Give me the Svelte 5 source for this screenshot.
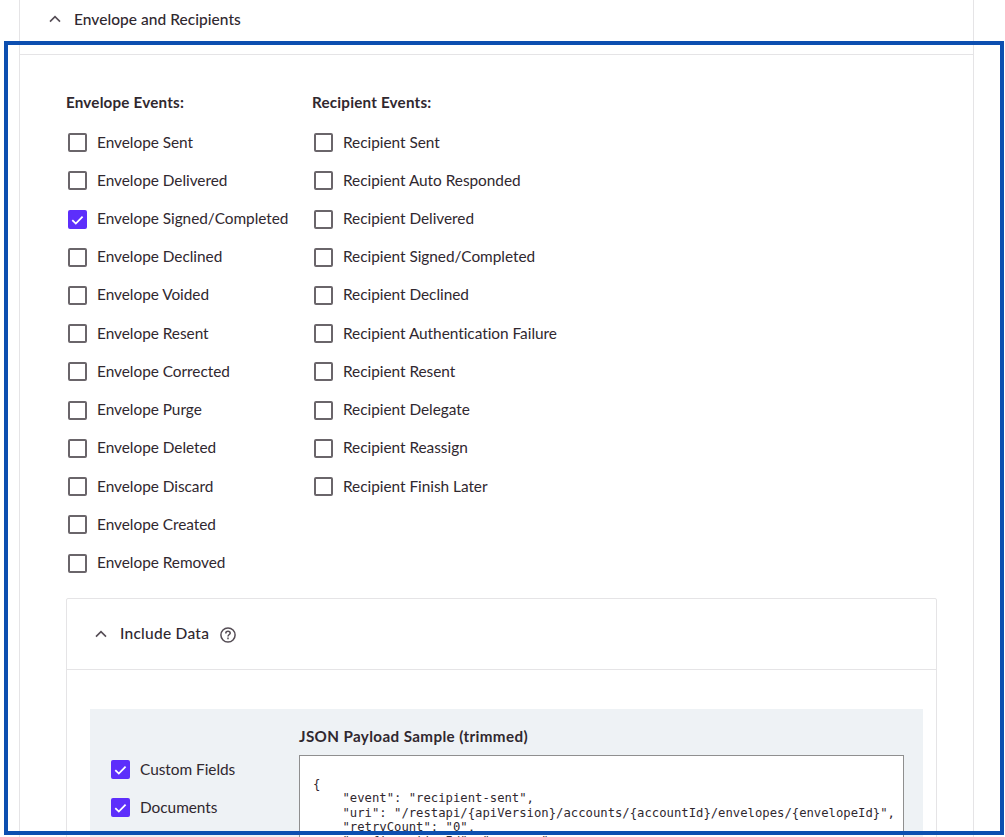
<script lang="ts">
	type Option = { label: string; checked?: boolean };

	const toOptions = (prefix: string, names: string[], checked: string[] = []): Option[] =>
		names.map((name) => ({ label: `${prefix} ${name}`, checked: checked.includes(name) }));

	let groups = $state([
		{
			title: "Envelope Events:",
			options: toOptions(
				"Envelope",
				[
					"Sent",
					"Delivered",
					"Signed/Completed",
					"Declined",
					"Voided",
					"Resent",
					"Corrected",
					"Purge",
					"Deleted",
					"Discard",
					"Created",
					"Removed",
				],
				["Signed/Completed"]
			),
		},
		{
			title: "Recipient Events:",
			options: toOptions("Recipient", [
				"Sent",
				"Auto Responded",
				"Delivered",
				"Signed/Completed",
				"Declined",
				"Authentication Failure",
				"Resent",
				"Delegate",
				"Reassign",
				"Finish Later",
			]),
		},
	]);

	let includes: Option[] = $state([
		{ label: "Custom Fields", checked: true },
		{ label: "Documents", checked: true },
		{ label: "", checked: false },
	]);

	const payload = `{
    "event": "recipient-sent",
    "uri": "/restapi/{apiVersion}/accounts/{accountId}/envelopes/{envelopeId}",
    "retryCount": "0",
    "configurationId": "xxxxxxx",`;
</script>

{#snippet chevron()}
	<svg class="chevron" viewBox="0 0 12 8" aria-hidden="true">
		<path d="M1 6.6 6 1.6 11 6.6" />
	</svg>
{/snippet}

{#snippet checkbox(option: Option)}
	<label class="option">
		<input type="checkbox" bind:checked={option.checked} />
		<span class="box" class:checked={option.checked}>
			{#if option.checked}
				<svg viewBox="0 0 19 19" aria-hidden="true"><path d="M4.3 10.2 7.8 13.6 14.6 6.6" /></svg>
			{/if}
		</span>
		<span class="label">{option.label}</span>
	</label>
{/snippet}

<div class="page">
	<section class="panel">
		<header class="panel-header">
			{@render chevron()}
			<h2>Envelope and Recipients</h2>
		</header>

		<div class="events">
			{#each groups as group}
				<div class="group">
					<h3>{group.title}</h3>
					{#each group.options as option}
						{@render checkbox(option)}
					{/each}
				</div>
			{/each}
		</div>

		<section class="include">
			<header class="include-header">
				{@render chevron()}
				<h2>Include Data</h2>
				<svg class="help" viewBox="0 0 16 16" aria-hidden="true">
					<circle cx="8" cy="8" r="7.1" />
					<path d="M5.8 6.4C5.8 5.1 6.7 4.3 8 4.3S10.2 5.1 10.2 6.2C10.2 7.5 8 7.6 8 9.4" />
					<path d="M8 10.6V12.2" />
				</svg>
			</header>
			<div class="include-body">
				<div class="include-options">
					{#each includes as option}
						{@render checkbox(option)}
					{/each}
				</div>
				<div class="sample">
					<h4>JSON Payload Sample (trimmed)</h4>
					<pre>{payload}</pre>
				</div>
			</div>
		</section>
	</section>

	<div class="highlight"></div>
</div>

<style>
	:global(body) {
		background: #fff;
		overflow: hidden;
	}
	.page {
		position: relative;
		box-sizing: border-box;
		width: 1005px;
		height: 837px;
		padding: 0 31px 0 19px;
		overflow: hidden;
		font-family: Lato, "Liberation Sans", sans-serif;
		color: #30282f;
	}
	h2,
	h3,
	h4 {
		margin: 0;
	}
	.panel {
		box-sizing: border-box;
		height: 1000px;
		border: solid #e5e4e6;
		border-width: 0 1px;
	}
	.panel-header {
		display: flex;
		align-items: center;
		box-sizing: border-box;
		height: 55px;
		padding: 0 0 16px 29px;
		border-bottom: 1px solid #e5e4e6;
	}
	.chevron {
		width: 12px;
		height: 8px;
		fill: none;
		stroke: #554d55;
		stroke-width: 1.6;
	}
	h2 {
		margin-left: 13px;
		font-size: 15.5px;
		font-weight: 500;
		line-height: 20px;
	}
	.panel-header h2 {
		letter-spacing: 0.04px;
	}
	.events {
		display: flex;
		box-sizing: border-box;
		height: 543px;
		padding: 37px 0 0 46px;
	}
	.group {
		width: 246px;
		flex-shrink: 0;
	}
	.group:last-child {
		width: 300px;
	}
	h3,
	h4 {
		font-size: 15.2px;
		font-weight: 700;
		line-height: 20px;
	}
	h3 {
		margin-bottom: 11px;
		letter-spacing: 0.2px;
	}
	h4 {
		letter-spacing: 0.38px;
	}
	.option {
		display: flex;
		align-items: center;
		height: 38.22px;
		padding-left: 2px;
	}
	.option input {
		position: absolute;
		opacity: 0;
	}
	.box {
		box-sizing: border-box;
		flex-shrink: 0;
		width: 19px;
		height: 19px;
		margin-top: 1px;
		border: 2px solid #6a656a;
		border-radius: 2px;
		background: #fff;
	}
	.box.checked {
		border: 0;
		background: #5d2efb;
	}
	.box svg {
		display: block;
		width: 19px;
		height: 19px;
		fill: none;
		stroke: #fff;
		stroke-width: 1.8;
	}
	.label {
		margin: 0 0 1px 10px;
		font-size: 15.4px;
		line-height: 20px;
		white-space: nowrap;
		letter-spacing: -0.03px;
	}
	.include {
		box-sizing: border-box;
		width: 871px;
		height: 400px;
		margin-left: 46px;
		border: 1px solid #e5e4e6;
		border-radius: 2px;
	}
	.include-header {
		display: flex;
		align-items: center;
		height: 70px;
		padding-left: 28px;
		border-bottom: 1px solid #e5e4e6;
	}
	.include-header h2 {
		margin-bottom: 2px;
		letter-spacing: 0.25px;
	}
	.help {
		width: 16px;
		height: 16px;
		margin: 1px 0 0 11px;
		fill: none;
		stroke: #554d55;
		stroke-width: 1.5;
	}
	.include-body {
		display: flex;
		box-sizing: border-box;
		width: 833px;
		height: 300px;
		margin: 39px 0 0 23px;
		background: #eef2f5;
	}
	.include-options {
		width: 209px;
		padding-top: 41px;
	}
	.include-options .option {
		padding-left: 21px;
	}
	.sample {
		padding-top: 17px;
	}
	pre {
		box-sizing: border-box;
		width: 605px;
		height: 240px;
		margin: 9px 0 0;
		padding: 21px 0 0 13px;
		border: 1px solid #8f8f8f;
		background: #fff;
		font-family: "DejaVu Sans Mono", "Liberation Mono", monospace;
		font-size: 12.24px;
		line-height: 14.35px;
	}
	/* annotation frame drawn over the form */
	.highlight {
		position: absolute;
		box-sizing: border-box;
		top: 41px;
		left: 4px;
		width: 1000px;
		height: 794px;
		border: 4px solid #0d4fb0;
	}
</style>
